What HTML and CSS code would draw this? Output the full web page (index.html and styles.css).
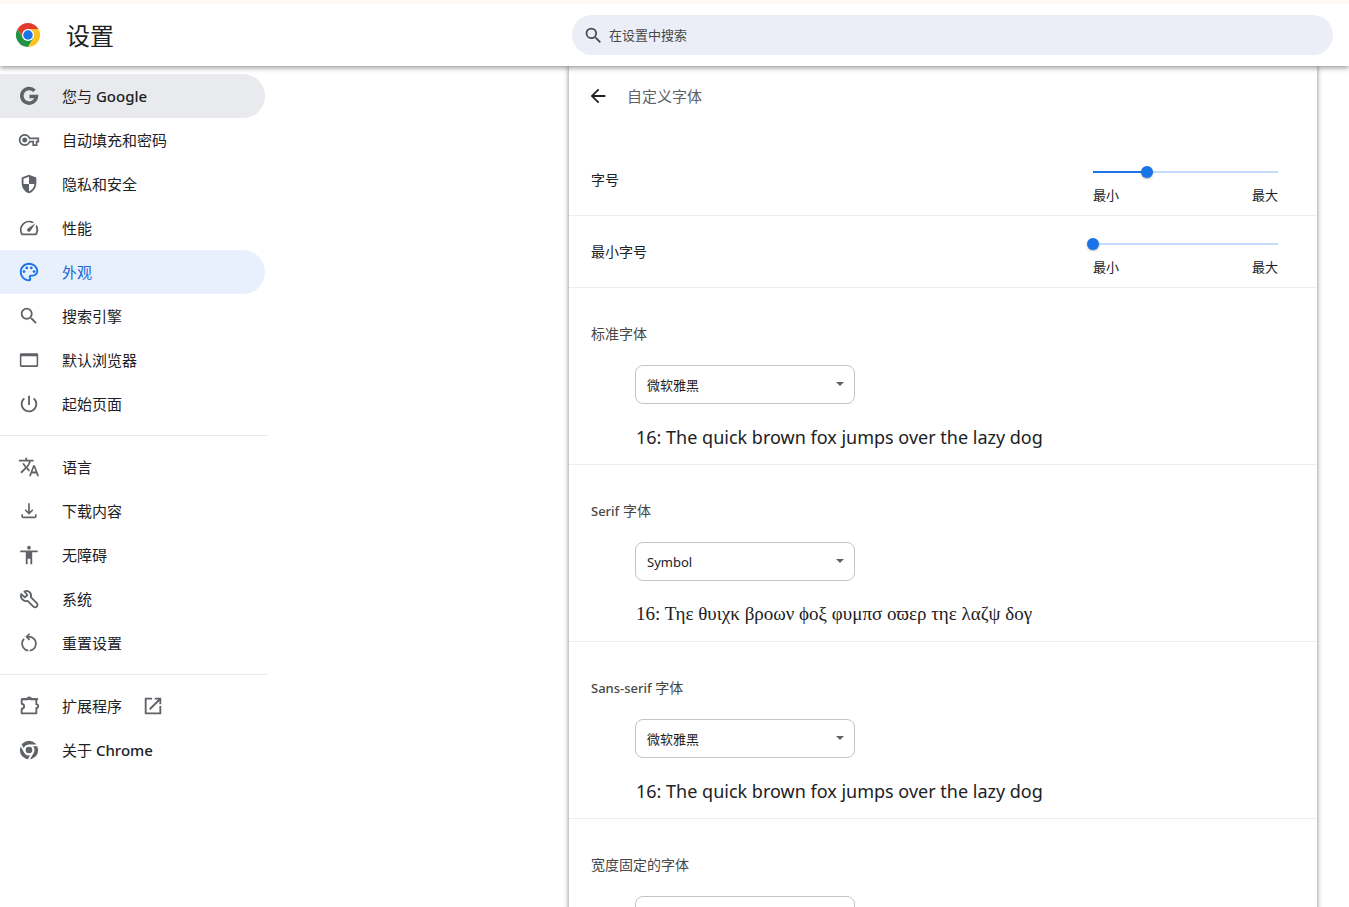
FILE: index.html
```html
<!DOCTYPE html>
<html lang="zh-CN">
<head>
<meta charset="utf-8">
<title>设置 - 自定义字体</title>
<link rel="stylesheet" href="styles.css">
</head>
<body>
<header class="toolbar">
  <div class="brand">
    <svg class="logo" viewBox="0 0 48 48" aria-hidden="true">
      <path fill="#e33b2e" d="M3.2 12A24 24 0 0 1 44.8 12L24 12L13.6 30Z"/>
      <path fill="#fcc31e" d="M44.8 12A24 24 0 0 1 24 48L34.4 30L24 12Z"/>
      <path fill="#229342" d="M24 48A24 24 0 0 1 3.2 12L13.6 30L34.4 30Z"/>
      <circle cx="24" cy="24" r="12" fill="#fff"/>
      <circle cx="24" cy="24" r="9.5" fill="#1a73e8"/>
    </svg>
    <h1 class="title">设置</h1>
  </div>
  <label class="search">
    <svg class="search-icon" viewBox="0 0 24 24" aria-hidden="true"><path d="M15.5 14h-.79l-.28-.27A6.47 6.47 0 0 0 16 9.5 6.5 6.5 0 1 0 9.5 16c1.61 0 3.09-.59 4.23-1.57l.27.28v.79l5 4.99L20.49 19zm-6 0a4.5 4.5 0 1 1 0-9 4.5 4.5 0 0 1 0 9z"/></svg>
    <input class="search-input" type="search" placeholder="在设置中搜索" aria-label="在设置中搜索">
  </label>
</header>
<div class="layout">
  <nav class="menu">
    <a class="item hovered" href="#people"><svg class="icon" viewBox="0 0 24 24"><path class="line" stroke-width="3.8" d="M18 6.3A8 8 0 1 0 20.1 12.5H12.5"/></svg><span>您与 <span class="latin">Google</span></span></a>
    <a class="item" href="#autofill"><svg class="icon" viewBox="-1 -1 26 26"><path d="M22 19h-6v-4h-2.68c-1.14 2.42-3.6 4-6.32 4-3.86 0-7-3.14-7-7s3.14-7 7-7c2.72 0 5.17 1.58 6.32 4H24v6h-2v4zm-4-2h2v-4h2v-2H11.94l-.23-.67C11.01 8.34 9.11 7 7 7c-2.76 0-5 2.24-5 5s2.24 5 5 5c2.11 0 4.01-1.34 4.71-3.33l.23-.67H18v4zM7 15c-1.65 0-3-1.35-3-3s1.35-3 3-3 3 1.35 3 3-1.35 3-3 3z"/></svg>自动填充和密码</a>
    <a class="item" href="#privacy"><svg class="icon" viewBox="0 0 24 24"><path fill-rule="evenodd" d="M12 2 4 5v6.1c0 5.05 3.4 9.8 8 10.9 4.6-1.1 8-5.85 8-10.9V5zM12 4.1V12h6c-.5 3.8-2.8 6.9-6 7.9V12H6V6.4z"/></svg>隐私和安全</a>
    <a class="item" href="#performance"><svg class="icon" viewBox="0 0 24 24"><path d="m20.38 8.57-1.23 1.85a8 8 0 0 1-.22 7.58H5.07A8 8 0 0 1 15.58 6.85l1.85-1.23A10 10 0 0 0 3.35 19a2 2 0 0 0 1.72 1h13.85a2 2 0 0 0 1.74-1 10 10 0 0 0-.27-10.44zm-9.79 6.84a2 2 0 0 0 2.83 0l5.66-8.49-8.49 5.66a2 2 0 0 0 0 2.83z"/></svg>性能</a>
    <a class="item selected" href="#appearance" aria-current="page"><svg class="icon" viewBox="0 0 24 24"><path d="M12 22C6.49 22 2 17.51 2 12S6.49 2 12 2s10 4.04 10 9c0 3.31-2.69 6-6 6h-1.77c-.28 0-.5.22-.5.5 0 .12.05.23.13.33.41.47.64 1.06.64 1.67A2.5 2.5 0 0 1 12 22zm0-18c-4.41 0-8 3.59-8 8s3.59 8 8 8c.28 0 .5-.22.5-.5a.54.54 0 0 0-.14-.35c-.41-.46-.63-1.05-.63-1.65a2.5 2.5 0 0 1 2.5-2.5H16c2.21 0 4-1.79 4-4 0-3.86-3.59-7-8-7z"/><circle cx="6.5" cy="11.5" r="1.5"/><circle cx="9.5" cy="7.5" r="1.5"/><circle cx="14.5" cy="7.5" r="1.5"/><circle cx="17.5" cy="11.5" r="1.5"/></svg>外观</a>
    <a class="item" href="#search"><svg class="icon" viewBox="0 0 24 24"><path d="M15.5 14h-.79l-.28-.27A6.47 6.47 0 0 0 16 9.5 6.5 6.5 0 1 0 9.5 16c1.61 0 3.09-.59 4.23-1.57l.27.28v.79l5 4.99L20.49 19zm-6 0a4.5 4.5 0 1 1 0-9 4.5 4.5 0 0 1 0 9z"/></svg>搜索引擎</a>
    <a class="item" href="#browser"><svg class="icon" viewBox="0 0 24 24"><path fill-rule="evenodd" d="M20.500 4.500h-17A1.500 1.500 0 0 0 2 6v12a1.500 1.500 0 0 0 1.500 1.500h17A1.500 1.500 0 0 0 22 18V6a1.500 1.500 0 0 0-1.500-1.500zM20.300 17.800H3.700V8h16.600z"/></svg>默认浏览器</a>
    <a class="item" href="#startup"><svg class="icon" viewBox="0 0 24 24"><path d="M13 3h-2v10h2zm4.83 2.17-1.42 1.42A6.92 6.92 0 0 1 19 12a7 7 0 1 1-11.42-5.42L6.17 5.17A9 9 0 1 0 21 12a8.96 8.96 0 0 0-3.17-6.83z"/></svg>起始页面</a>
    <hr class="divider">
    <a class="item" href="#languages"><svg class="icon" viewBox="0 0 24 24"><path d="m12.87 15.07-2.54-2.51.03-.03A17.52 17.52 0 0 0 14.07 6H17V4h-7V2H8v2H1v2h11.17C11.5 7.92 10.44 9.75 9 11.35 8.07 10.32 7.3 9.19 6.69 8h-2c.73 1.63 1.73 3.17 2.98 4.56l-5.09 5.02L4 19l5-5 3.11 3.11zM18.5 10h-2L12 22h2l1.12-3h4.75L21 22h2zm-2.62 7 1.62-4.33L19.12 17z"/></svg>语言</a>
    <a class="item" href="#downloads"><svg class="icon" viewBox="0 0 24 24"><path class="line" stroke-width="1.8" d="M12 3.5v11M7.800 10.600 12 14.800l4.200-4.200M4.500 15.500v2a1.500 1.500 0 0 0 1.500 1.500h12a1.500 1.500 0 0 0 1.500-1.500v-2"/></svg>下载内容</a>
    <a class="item" href="#accessibility"><svg class="icon" viewBox="0 0 24 24"><path d="M12 2a2 2 0 1 1 0 4 2 2 0 0 1 0-4zm9.500 7H15.500v13h-2v-6h-3v6h-2V9h-6V7h19z"/></svg>无障碍</a>
    <a class="item" href="#system"><svg class="icon" viewBox="0 0 24 24"><path class="line" stroke-width="2" stroke-linejoin="round" d="M3.600 6.600 7.400 10.200 10.200 7.600 7 3.800C10.500 2 15.500 5 14 10L20.500 16.600a2.500 2.500 0 0 1-3.700 3.700L10.500 14C6 15.500 2 11 3.600 6.600Z"/></svg>系统</a>
    <a class="item" href="#reset"><svg class="icon" viewBox="0 0 24 24"><path class="line" stroke-width="1.900" d="M12.800 20.400A7.700 7.700 0 0 0 15.800 6.200Q13.800 5 9.600 5.200M11.200 20.400A7.700 7.700 0 0 1 6.600 7.500M12.600 1.900 9.400 5.200l3.200 3.300"/></svg>重置设置</a>
    <hr class="divider">
    <a class="item" href="#extensions"><svg class="icon" viewBox="0 0 24 24"><path class="line" stroke-width="2" stroke-linejoin="round" d="M4 4.500h18"  stroke="none"/><path class="line" stroke-width="2" stroke-linejoin="round" d="M4 4.600h6.200a2 2 0 0 1 4 0H20v5.600a2 2 0 0 1 0 4V20H4v-5a2.600 2.600 0 0 0 0-5.400Z"/></svg>扩展程序<svg class="icon" viewBox="0 0 24 24"><path d="M19 19H5V5h6V3H3v18h18v-9h-2zM14 3v2h3.590l-9.830 9.830 1.410 1.410L19 6.410V10h2V3z"/></svg></a>
    <a class="item" href="#about"><svg class="icon" viewBox="0 0 24 24"><circle cx="12" cy="12" r="10"/><circle class="gap" cx="12" cy="12" r="5"/><path class="gap" d="M12 7h9M7.7 14.5 3.2 6.7M16.300 14.500l-4.500 7.800"/><circle cx="12" cy="12" r="3.6"/></svg><span>关于 <span class="latin">Chrome</span></span></a>
  </nav>
  <main class="panel">
    <div class="panel-head">
      <button class="back" type="button" aria-label="返回"><svg class="back-icon" viewBox="0 0 24 24"><path d="M20 11H7.83l5.59-5.59L12 4l-8 8 8 8 1.41-1.41L7.83 13H20z"/></svg></button>
      <h2 class="panel-title">自定义字体</h2>
    </div>
    <div class="row">
      <label class="row-label" for="size">字号</label>
      <div class="slider">
        <input class="range" id="size" type="range" min="0" max="100" value="29" style="--value: 29%">
        <div class="limits"><span>最小</span><span>最大</span></div>
      </div>
    </div>
    <div class="row">
      <label class="row-label" for="min-size">最小字号</label>
      <div class="slider">
        <input class="range" id="min-size" type="range" min="0" max="100" value="0" style="--value: 0%">
        <div class="limits"><span>最小</span><span>最大</span></div>
      </div>
    </div>
    <section class="font">
      <label class="font-label" for="standard">标准字体</label>
      <div class="select-box"><select class="select" id="standard"><option>微软雅黑</option></select></div>
      <p class="sample">16: The quick brown fox jumps over the lazy dog</p>
    </section>
    <section class="font">
      <label class="font-label" for="serif"><span class="latin">Serif</span> 字体</label>
      <div class="select-box"><select class="select" id="serif"><option>Symbol</option></select></div>
      <p class="sample symbol">16: Τηε θυιχκ βροων ϕοξ φυμπσ οϖερ τηε λαζψ δογ</p>
    </section>
    <section class="font">
      <label class="font-label" for="sans"><span class="latin">Sans-serif</span> 字体</label>
      <div class="select-box"><select class="select" id="sans"><option>微软雅黑</option></select></div>
      <p class="sample">16: The quick brown fox jumps over the lazy dog</p>
    </section>
    <section class="font">
      <label class="font-label" for="fixed">宽度固定的字体</label>
      <div class="select-box"><select class="select" id="fixed"><option>Consolas</option></select></div>
    </section>
  </main>
</div>
</body>
</html>
```
FILE: styles.css
```css
* { box-sizing: border-box; }

body {
  margin: 0;
  height: 100vh;
  display: flex;
  flex-direction: column;
  overflow: hidden;
  border-top: 4px solid #fff8f5;
  background: #fff;
  color: #202124;
  font: 14px/20px "Noto Sans", "Noto Sans CJK SC", sans-serif;
}

.toolbar {
  position: relative;
  z-index: 1;
  flex: none;
  display: grid;
  grid-template-columns: 572fr 761fr;
  align-items: center;
  height: 62px;
  padding-right: 16px;
  background: #fff;
  box-shadow: 0 2px 5px rgba(0, 0, 0, .4);
}

.brand { display: flex; align-items: center; gap: 26px; padding-left: 16px; }
.logo { width: 24px; height: 24px; }
.title { margin: 0; padding-top: 2px; font-size: 24px; line-height: 32px; font-weight: 400; }

.search {
  display: flex;
  align-items: center;
  gap: 5px;
  height: 40px;
  padding: 0 11px;
  border-radius: 20px;
  background: #ebeef7;
}
.search-icon { width: 21px; height: 21px; fill: #474747; }
.search-input {
  flex: 1;
  min-width: 0;
  padding: 0;
  border: 0;
  outline: 0;
  background: none;
  color: #474747;
  font: inherit;
  font-size: 13px;
}
.search-input::placeholder { color: #474747; }

.layout {
  flex: 1;
  min-height: 0;
  display: grid;
  grid-template-columns: 267px minmax(0, 302fr) minmax(0, 748fr);
  padding-right: 32px;
}

.latin { font-weight: 500; }

.menu { padding-top: 8px; }
.item {
  display: flex;
  align-items: center;
  gap: 22px;
  height: 44px;
  margin-right: 2px;
  padding-left: 18px;
  border-radius: 0 22px 22px 0;
  color: #202124;
  font-size: 15px;
  text-decoration: none;
}
.hovered { background: #e8eaed; }
.selected { background: #e8f0fe; color: #1967d2; }
.icon { width: 22px; height: 22px; fill: #5f6368; stroke: none; }
.selected .icon { fill: #1a73e8; }
.icon .line { fill: none; stroke: #5f6368; }
.icon .gap { fill: #fff; stroke: #fff; stroke-width: 2; }
.icon + .icon, .item > .icon:last-child:not(:first-child) { margin-left: -2px; }
.divider { margin: 9px 0; border: 0; border-top: 1px solid #e8e8e8; }

.panel {
  grid-column: 3;
  background: #fff;
  box-shadow: 0 0 5px rgba(0, 0, 0, .5);
}
.panel-head {
  display: flex;
  align-items: center;
  gap: 18px;
  height: 60px;
  margin-bottom: 18px;
  padding-left: 18px;
}
.back { display: flex; padding: 0; border: 0; background: none; }
.back-icon { width: 22px; height: 22px; fill: #202124; }
.panel-title { margin: 0; color: #5f6368; font-size: 15px; font-weight: 400; }

.row {
  display: flex;
  justify-content: space-between;
  align-items: center;
  height: 72px;
  padding: 0 39px 0 22px;
  border-bottom: 1px solid #ededed;
}
.slider { width: 185px; padding-top: 11px; }
.range {
  display: block;
  appearance: none;
  width: calc(100% + 12px);
  height: 12px;
  margin: 0 -6px 7px;
  background: linear-gradient(to right, #1a73e8 var(--value), #c6dafc var(--value)) center / calc(100% - 12px) 2px no-repeat;
}
.range::-webkit-slider-thumb {
  appearance: none;
  width: 12px;
  height: 12px;
  border-radius: 50%;
  background: #1a73e8;
  box-shadow: 0 1px 2px rgba(0, 0, 0, .3);
}
.limits { display: flex; justify-content: space-between; font-size: 13px; }

.font { padding: 36px 22px 15px; border-bottom: 1px solid #ededed; }
.font-label { display: block; margin-bottom: 21px; color: #474747; }
.font-label .latin { font-size: 13px; }
.select-box { position: relative; width: 220px; margin-left: 44px; }
.select-box::after {
  content: "";
  position: absolute;
  top: 17px;
  right: 11px;
  border: 4px solid transparent;
  border-top-color: #5f6368;
  border-bottom: 0;
  pointer-events: none;
}
.select {
  display: block;
  appearance: none;
  width: 100%;
  height: 39px;
  padding: 0 11px;
  border: 1px solid #c4c4c4;
  border-radius: 8px;
  background: #fff;
  color: #202124;
  font: inherit;
  font-size: 13px;
}
.sample { margin: 21px 0 0 45px; font-size: 18px; line-height: 24px; }
.symbol { font-family: "Liberation Serif", serif; font-size: 19px; }
```
